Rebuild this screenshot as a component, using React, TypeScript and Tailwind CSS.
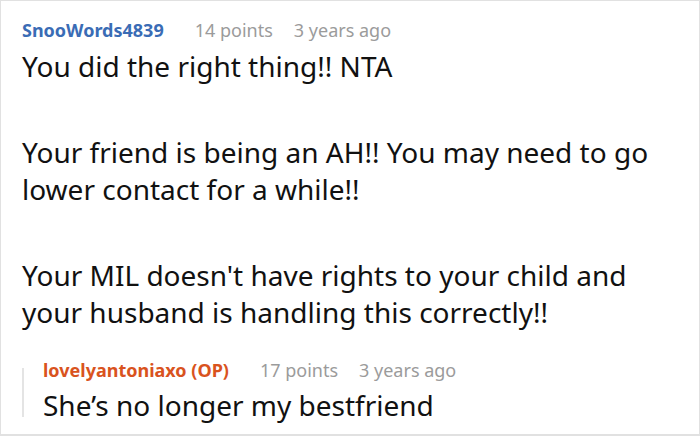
const Meta = ({ name, color, points }: { name: string; color: string; points: number }) => (
  <div className="flex items-baseline text-[18px] leading-[24px]">
    <span className={`font-bold ${color}`}>{name}</span>
    <span className="ml-[31px] text-[#9b9b9b]">{points} points</span>
    <span className="ml-[21px] text-[#9b9b9b]">3 years ago</span>
  </div>
);

const App = () => {
  return (
    <div className="h-[436px] w-[700px] overflow-hidden border border-b-2 border-[#e1e1e1] bg-white font-['Noto_Sans',sans-serif] text-[#111]">
      <div className="pl-[21px] pt-[17px]">
        <Meta name="SnooWords4839" color="text-[#3a6cb5]" points={14} />
        <div className="mt-[6px] flex flex-col gap-[49px] text-[28px] leading-[37px]">
          <p>You did the right thing!! NTA</p>
          <p>
            Your friend is being an AH!! You may need to go
            <br />
            lower contact for a while!!
          </p>
          <p>
            Your MIL doesn't have rights to your child and
            <br />
            your husband is handling this correctly!!
          </p>
        </div>
      </div>
      <div className="mt-[27px] flex pl-[21px]">
        <div className="mt-[10px] h-[49px] w-[2px] bg-[#e4e4e4]" />
        <div className="ml-[19px]">
          <Meta name="lovelyantoniaxo (OP)" color="text-[#d9531e]" points={17} />
          <p className="mt-[5px] text-[28px] leading-[37px]">She’s no longer my bestfriend</p>
        </div>
      </div>
    </div>
  );
};

export default App;
